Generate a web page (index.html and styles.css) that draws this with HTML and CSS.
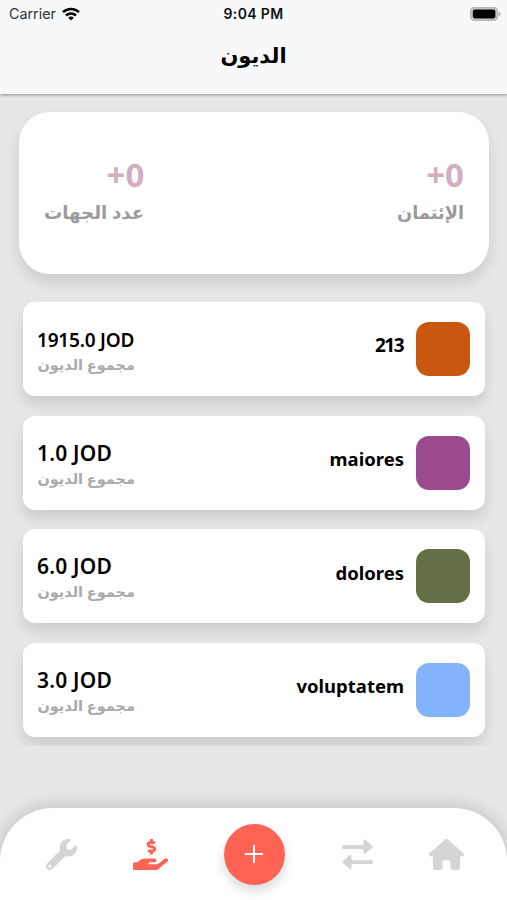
FILE: index.html
```
<!doctype html>
<html lang="ar">

	<head>
		<meta charset="UTF-8" />
		<title>الديون</title>
		<link rel="stylesheet" href="styles.css">
	</head>

	<body>
		<div id="wrap">
			<header>
				<div class="status">
					<div class="carrier">
						<span>Carrier</span>
						<svg width="18" height="14" viewBox="0 0 18 14" fill="none" stroke="#000" stroke-width="2.5">
							<path d="M1 5.2a11.5 11.5 0 0 1 16 0" />
							<path d="M4 8.5a7.2 7.2 0 0 1 10 0" />
							<path d="M9 13.6L6.2 10.8a4 4 0 0 1 5.6 0z" fill="#000" stroke="none" />
						</svg>
					</div>
					<span class="time">9:04 PM</span>
					<svg class="battery" width="31" height="14" viewBox="0 0 31 14">
						<rect x=".7" y=".7" width="26.6" height="12.6" rx="3.5" fill="#d0d0d1" stroke="#b4b4b6" stroke-width="1.4" />
						<rect x="2.8" y="2.6" width="22.6" height="8.8" rx="1.8" />
						<path d="M28.6 4.6q2 .8 2 2.4t-2 2.4z" fill="#b0b0b2" />
					</svg>
				</div>
				<h1 dir="rtl">الديون</h1>
			</header>

			<section class="summary">
				<div>
					<b>+0</b>
					<p class="orgs" dir="rtl">عدد الجهات</p>
				</div>
				<div>
					<b>+0</b>
					<p dir="rtl">الإئتمان</p>
				</div>
			</section>

			<ul class="list">
				<li>
					<div class="sum">
						<strong class="long">1915.0 JOD</strong>
						<p dir="rtl">مجموع الديون</p>
					</div>
					<span class="name digits">213</span>
					<i class="orange"></i>
				</li>
				<li>
					<div class="sum">
						<strong>1.0 JOD</strong>
						<p dir="rtl">مجموع الديون</p>
					</div>
					<span class="name">maiores</span>
					<i class="purple"></i>
				</li>
				<li>
					<div class="sum">
						<strong>6.0 JOD</strong>
						<p dir="rtl">مجموع الديون</p>
					</div>
					<span class="name">dolores</span>
					<i class="green"></i>
				</li>
				<li>
					<div class="sum">
						<strong>3.0 JOD</strong>
						<p dir="rtl">مجموع الديون</p>
					</div>
					<span class="name">voluptatem</span>
					<i class="blue"></i>
				</li>
			</ul>

			<nav>
				<a href="javascript:;">
					<svg width="31" height="31" viewBox="0 0 512 512"><path d="M507.73 109.1c-2.24-9.03-13.54-12.09-20.12-5.51l-74.36 74.36-67.88-11.31-11.31-67.88 74.36-74.36c6.62-6.62 3.43-17.9-5.66-20.16-47.38-11.74-99.55.91-136.58 37.93-39.64 39.64-50.55 97.1-34.05 147.2L18.74 402.76c-24.99 24.99-24.99 65.51 0 90.5 24.99 24.99 65.51 24.99 90.5 0l213.21-213.21c50.12 16.71 107.47 5.68 147.37-34.22 37.07-37.07 49.7-89.32 37.91-136.73zM64 472c-13.25 0-24-10.75-24-24 0-13.26 10.75-24 24-24s24 10.74 24 24c0 13.25-10.75 24-24 24z" /></svg>
				</a>
				<a href="javascript:;" class="active">
					<svg width="35" height="31" viewBox="0 0 576 512"><path d="M271.06,144.3l54.27,14.3a8.59,8.59,0,0,1,6.63,8.1c0,4.6-4.09,8.4-9.12,8.4h-35.6a30,30,0,0,1-11.19-2.2c-5.24-2.2-11.28-1.7-15.3,2l-19,17.5a11.68,11.68,0,0,0-2.25,2.66,11.42,11.42,0,0,0,3.88,15.74,83.77,83.77,0,0,0,34.51,11.5V240c0,8.8,7.83,16,17.37,16h17.37c9.55,0,17.38-7.2,17.38-16V222.4c32.93-3.6,57.84-31,53.5-63-3.15-23-22.46-41.3-46.56-47.7L282.68,97.4a8.59,8.59,0,0,1-6.63-8.1c0-4.6,4.09-8.4,9.12-8.4h35.6A30,30,0,0,1,332,83.1c5.23,2.2,11.28,1.7,15.3-2l19-17.5A11.31,11.31,0,0,0,368.47,61a11.43,11.43,0,0,0-3.84-15.78,83.82,83.82,0,0,0-34.52-11.5V16c0-8.8-7.82-16-17.37-16H295.37C285.82,0,278,7.2,278,16V33.6c-32.89,3.6-57.85,31-53.51,63C227.63,119.6,247,137.9,271.06,144.3ZM565.27,328.1c-11.8-10.7-30.2-10-42.6,0L430.27,402a63.64,63.64,0,0,1-40,14H272a16,16,0,0,1,0-32h78.29c15.9,0,30.71-10.9,33.25-26.6a31.2,31.2,0,0,0,.46-5.46A32,32,0,0,0,352,320H192a117.66,117.66,0,0,0-74.1,26.29L71.4,384H16A16,16,0,0,0,0,400v96a16,16,0,0,0,16,16H372.77a64,64,0,0,0,40-14L564,377a32,32,0,0,0,1.28-48.9Z" /></svg>
				</a>
				<a href="javascript:;" class="add">
					<svg width="18" height="18" viewBox="0 0 18 18" fill="none" stroke="#fff" stroke-width="2"><path d="M9 0v18M0 9h18" /></svg>
				</a>
				<a href="javascript:;">
					<svg width="31" height="31" viewBox="0 0 31 31"><path d="M1 6h20.5V2q0-2.6 2-1l6.600 5.700q1.200 1.100 0 2.200l-6.600 5.700q-2 1.400-2-1v-3.700H1q-.8 0-.8-.8V6.800q0-.8.8-.8zM30 21.200H9.500v-4q0-2.600-2-1L.9 21.900q-1.200 1.100 0 2.200l6.600 5.700q2 1.400 2-1v-3.700H30q.8 0 .8-.8v-2.300q0-.8-.8-.8z" /></svg>
				</a>
				<a href="javascript:;">
					<svg width="35" height="31" viewBox="0 0 576 512"><path d="M575.8 255.500c0 18-15 32.100-32 32.100h-32l.7 160.200c0 2.700-.2 5.400-.5 8.100V472c0 22.100-17.900 40-40 40H392c-22.100 0-40-17.900-40-40V384c0-17.700-14.300-32-32-32H256c-17.700 0-32 14.300-32 32v88c0 22.100-17.900 40-40 40H104c-22.100 0-40-17.900-40-40V287.600H32c-18 0-32-14-32-32.100c0-9 3-17 10-24L266.400 8c7-7 15-8 22-8s15 2 21 7L564.800 231.500c8 7 12 15 11 24z" /></svg>
				</a>
			</nav>
		</div>
	</body>

</html>
```
FILE: styles.css
```
* {
	margin: 0;
	padding: 0;
	box-sizing: border-box;
}

body {
	background: #e7e7e9;
	font-family: "Noto Sans", "DejaVu Sans", sans-serif;
}

#wrap {
	width: 507px;
	height: 900px;
	display: flex;
	flex-direction: column;
	overflow: hidden;
}

header {
	height: 94px;
	flex-shrink: 0;
	background: #f7f8fa;
	box-shadow: 0 1px 3px rgba(0, 0, 0, .4);
}

.status {
	height: 27px;
	padding: 0 6px 0 9px;
	display: grid;
	grid-template-columns: 1fr auto 1fr;
	align-items: center;
	font: 14.3px/27px Inter, sans-serif;
	color: #111;
}

.carrier {
	display: flex;
	align-items: center;
	gap: 6px;
	color: #333;
}

.time {
	margin-right: 3px;
	font-weight: 600;
	font-size: 14px;
	letter-spacing: .35px;
}

.battery {
	justify-self: end;
}

h1 {
	font-size: 21px;
	line-height: 57px;
	text-align: center;
	white-space: nowrap;
}

.summary {
	height: 162px;
	margin: 18px 18px 0 19px;
	padding: 44px 25px 0;
	flex-shrink: 0;
	display: flex;
	justify-content: space-between;
	text-align: right;
	background: #fff;
	border-radius: 31px;
	box-shadow: 0 8px 15px rgba(0, 0, 0, .12);
}

.summary b {
	display: block;
	font-size: 33px;
	line-height: 38px;
	color: #d3afbd;
}

.summary p {
	font-size: 17.8px;
	font-weight: bold;
	line-height: 36px;
	color: #9b9b9b;
	white-space: nowrap;
}

.summary .orgs {
	font-size: 18.2px;
}

/* cuts the last card's shadow */
.list {
	height: 472px;
	padding: 28px 22px 0 23px;
	list-style: none;
	display: flex;
	flex-direction: column;
	gap: 19.6px;
	flex-shrink: 0;
	overflow: hidden;
}

.list li {
	height: 94px;
	padding: 0 15px 0 14px;
	flex-shrink: 0;
	display: flex;
	align-items: center;
	background: #fff;
	border-radius: 12px;
	box-shadow: 0 8px 14px rgba(0, 0, 0, .12);
}

.sum {
	flex: 1;
	align-self: flex-start;
	padding-top: 23px;
}

.sum strong {
	display: block;
	font-size: 21px;
	line-height: 29px;
	font-weight: 600;
	letter-spacing: .2px;
}

.sum strong.long {
	font-size: 19px;
	line-height: 31px;
	letter-spacing: -.2px;
	margin-bottom: -2px;
}

.sum p {
	width: 98px;
	font-size: 14.500px;
	font-weight: bold;
	line-height: 20px;
	color: #aaa;
	white-space: nowrap;
}

.name {
	margin: 0 12px 8px 0;
	font-size: 18.5px;
	font-weight: 700;
}

.name.digits {
	font-size: 19px;
	letter-spacing: -1.5px;
	margin-right: 13px;
}

.list i {
	width: 54px;
	height: 54px;
	border-radius: 13px;
}

.orange {
	background: #ca5710;
}

.purple {
	background: #9b4a8e;
}

.green {
	background: #637046;
}

.blue {
	background: #83b3fb;
}

nav {
	height: 92px;
	margin-top: auto;
	padding: 0 43px 0 46px;
	flex-shrink: 0;
	display: flex;
	align-items: center;
	justify-content: space-between;
	background: #fff;
	border-radius: 53px 53px 0 0;
	box-shadow: 0 0 20px rgba(0, 0, 0, .2);
}

nav svg {
	display: block;
	fill: #d5d5d5;
}

nav .active svg {
	fill: #ff6354;
}

nav .add {
	width: 61px;
	height: 61px;
	margin: 0 1px 0 -1px;
	display: flex;
	align-items: center;
	justify-content: center;
	background: #ff6354;
	border-radius: 50%;
	box-shadow: 0 6px 12px rgba(0, 0, 0, .15);
}
```
